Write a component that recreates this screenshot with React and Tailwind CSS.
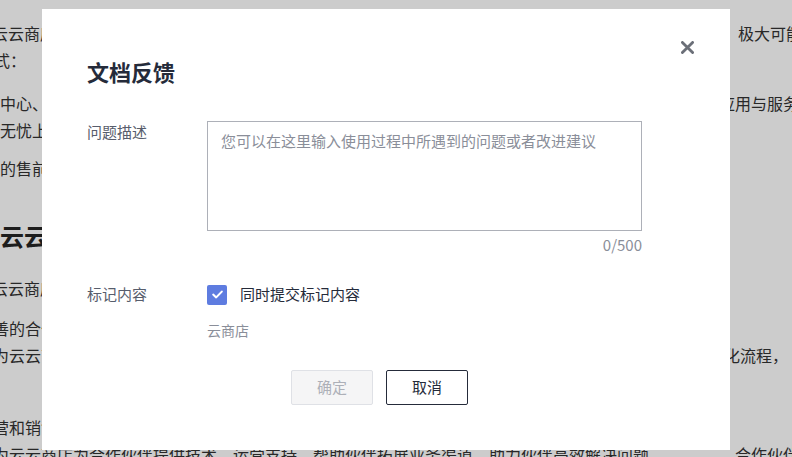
import React from "react";

const cjk = { fontFamily: '"Noto Sans CJK SC", "Noto Sans", sans-serif' };

function PageLine({ cols, left, right, className = "" }) {
  return (
    <div className={`grid whitespace-nowrap ${cols} ${className}`}>
      <div className="overflow-hidden">{left}</div>
      <div className="overflow-visible">{right}</div>
    </div>
  );
}

function CheckIcon() {
  return (
    <svg viewBox="0 0 16 16" className="h-[15px] w-[15px]" fill="none">
      <path d="M3.4 8.1 L6.6 11.1 L12.6 4.9" stroke="#ffffff" strokeWidth="2.2" strokeLinecap="round" strokeLinejoin="round" />
    </svg>
  );
}

function CloseIcon() {
  return (
    <svg viewBox="0 0 12 12" className="h-[13px] w-[13px]" fill="none">
      <path d="M1.3 1.3 L10.7 10.7 M10.7 1.3 L1.3 10.7" stroke="#6b6f78" strokeWidth="2.6" strokeLinecap="round" />
    </svg>
  );
}

export default function App() {
  return (
    <div className="relative h-[457px] w-[792px] overflow-hidden bg-white" style={cjk}>
      {/* article underneath the dialog */}
      <div className="pt-[20px] text-[16px] leading-[27px] text-[#333333]">
        <PageLine cols="grid-cols-[730px_auto]" className="-ml-[8px]" left="云云商店为合作伙伴提供多种合作方式，帮助伙伴快速上云" right="，极大可能" />
        <PageLine cols="grid-cols-[722px_auto]" className="-ml-[6px]" left="式：" right="" />
        <PageLine cols="grid-cols-[719px_auto]" className="mt-[16px]" left="中心、开发者生态与伙伴服务能力全面升级" right="应用与服务" />
        <PageLine cols="grid-cols-[726px_auto]" left="无忧上云，全流程支撑" right="" />
        <PageLine cols="grid-cols-[726px_auto]" className="mt-[11px]" left="的售前售后服务支持" right="" />
        <div className="mt-[37px] whitespace-nowrap text-[24px] font-bold leading-[34px] text-[#252525]">云云商店合作伙伴</div>
        <PageLine cols="grid-cols-[726px_auto]" className="mt-[22px] -ml-[8px]" left="云云商店合作伙伴计划" right="" />
        <PageLine cols="grid-cols-[726px_auto]" className="mt-[13px] -ml-[7px]" left="善的合作体系" right="" />
        <PageLine cols="grid-cols-[731px_auto]" className="-ml-[7px]" left="为云云商店提供简化" right="化流程，" />
        <PageLine cols="grid-cols-[726px_auto]" className="mt-[45px] -ml-[7px]" left="营和销售支持" right="" />
        <PageLine cols="grid-cols-[726px_auto]" className="-ml-[7px]" left="为云云商店为合作伙伴提供技术、运营支持，帮助伙伴拓展业务渠道，助力伙伴高效解决问题" right="。合作伙伴" />
      </div>

      {/* dimming layer */}
      <div className="absolute inset-0 bg-black/[0.2]" />

      {/* feedback dialog */}
      <div className="absolute left-[42px] top-[9px] h-[441px] w-[688px] bg-white pl-[45px] pt-[47px]">
        <button className="absolute left-[639px] top-[32px] flex h-[13px] w-[13px] items-center justify-center">
          <CloseIcon />
        </button>

        <h2 className="text-[22px] font-bold leading-[30px] text-[#252b3a]">文档反馈</h2>

        <div className="mt-[35px] flex">
          <div className="w-[120px] text-[15px] leading-[22px] text-[#575d6c]">问题描述</div>
          <div className="w-[435px]">
            <textarea
              className="block h-[110px] w-full resize-none border border-[#adb0b8] px-[13px] py-[8px] text-[15px] leading-[22px] text-[#252b3a] outline-none placeholder:text-[#8a8e99]"
              placeholder="您可以在这里输入使用过程中所遇到的问题或者改进建议"
              style={cjk}
            />
            <div className="mt-[4px] text-right text-[15px] leading-[20px] text-[#8a8e99]">0/500</div>
          </div>
        </div>

        <div className="mt-[28px] flex">
          <div className="w-[120px] text-[15px] leading-[22px] text-[#575d6c]">标记内容</div>
          <div className="w-[435px]">
            <label className="flex h-[22px] items-center">
              <span className="mt-[1px] flex h-[20px] w-[20px] items-center justify-center rounded-[2px] bg-[#5e7ce0]">
                <CheckIcon />
              </span>
              <span className="ml-[13px] text-[15px] leading-[22px] text-[#252b3a]">同时提交标记内容</span>
            </label>
            <div className="mt-[14px] text-[14px] leading-[22px] text-[#8a8e99]">云商店</div>
          </div>
        </div>

        <div className="mt-[29px] flex gap-[13px] pl-[204px]">
          <button className="h-[35px] w-[82px] rounded-[2px] border border-[#dfe1e6] bg-[#f5f5f6] text-[15px] text-[#adb0b8]" style={cjk}>确定</button>
          <button className="h-[35px] w-[82px] rounded-[2px] border border-[#252b3a] bg-white text-[15px] text-[#252b3a]" style={cjk}>取消</button>
        </div>
      </div>
    </div>
  );
}
